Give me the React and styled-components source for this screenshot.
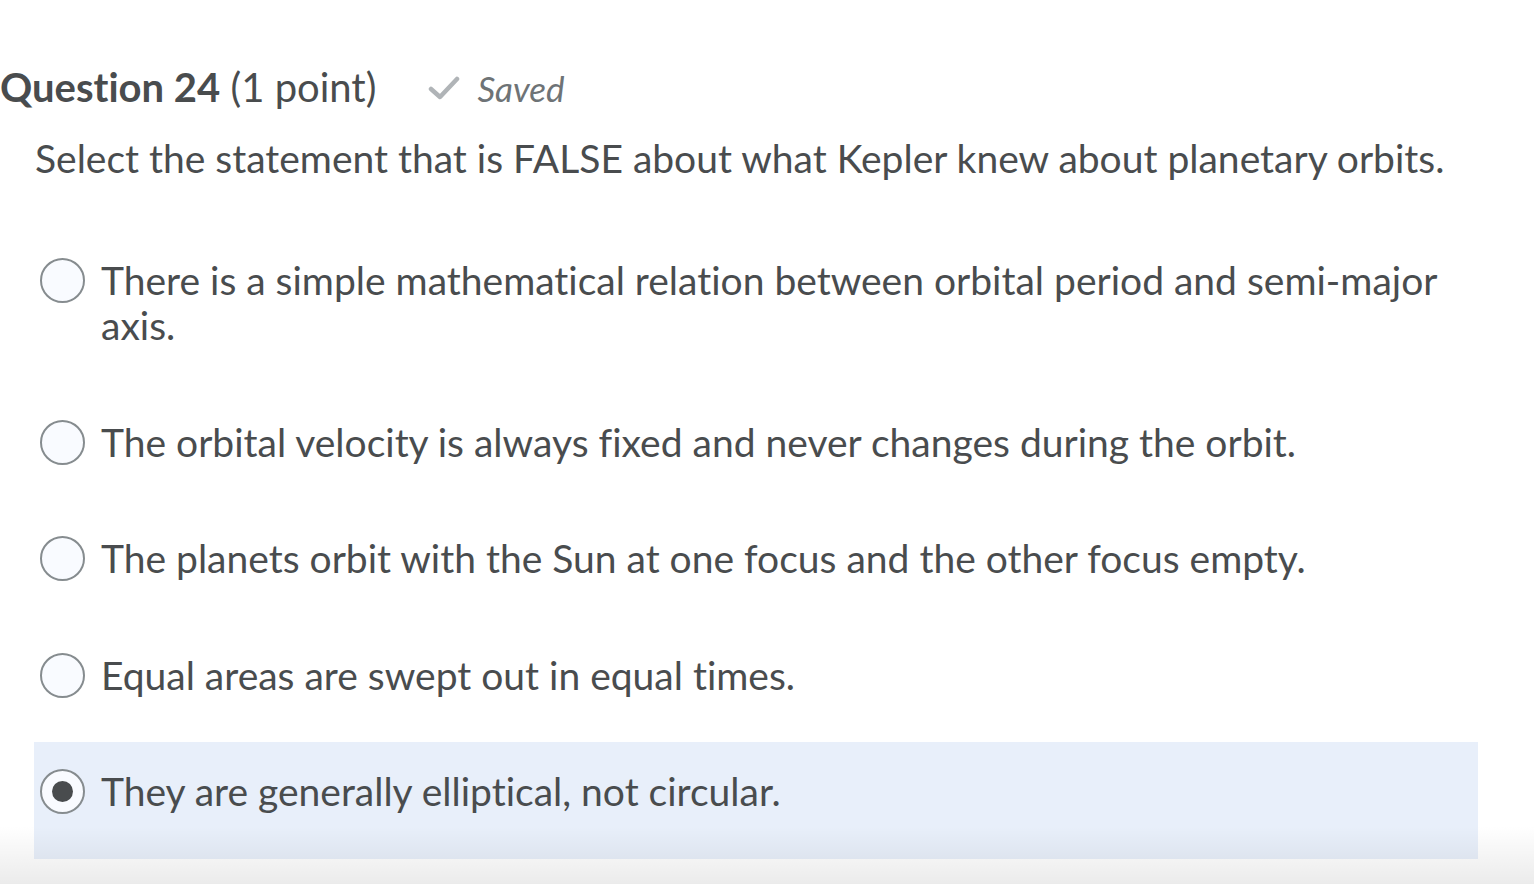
import React, { useState } from "react";
import styled, { createGlobalStyle } from "styled-components";

const GlobalStyle = createGlobalStyle`
  html, body {
    margin: 0;
    padding: 0;
    background: #fff;
  }
  body {
    font-family: Lato, "Open Sans", "Liberation Sans", sans-serif;
    font-variant-ligatures: none;
    color: #494c4e;
  }
`;

const Page = styled.div`
  width: 1534px;
  height: 884px;
  overflow: hidden;
  position: relative;
  padding-top: 65px;
  box-sizing: border-box;
`;

const Header = styled.div`
  display: flex;
  align-items: center;
  height: 45px;
`;

const Title = styled.h2`
  margin: 0;
  font-size: 40px;
  font-weight: 400;
  line-height: 45px;
  strong {
    font-weight: 700;
  }
`;

const Saved = styled.span`
  display: flex;
  align-items: center;
  gap: 17px;
  margin-left: 52px;
  font-size: 35px;
  font-style: italic;
  color: #6e7376;
`;

const Prompt = styled.p`
  margin: 26px 0 0 35px;
  font-size: 39px;
  line-height: 45px;
`;

const Options = styled.div`
  margin-top: 50px;
  display: flex;
  flex-direction: column;
`;

const Option = styled.label`
  display: flex;
  align-items: flex-start;
  margin-left: 34px;
  width: 1444px;
  box-sizing: border-box;
  padding: 27px 30px 44.5px 6px;
  background: ${({ selected }) => (selected ? "#e8effa" : "transparent")};
  cursor: pointer;
`;

const Radio = styled.span`
  flex: none;
  width: 45px;
  height: 45px;
  box-sizing: border-box;
  border-radius: 50%;
  border: 2px solid #868c8f;
  background: #f9fbff;
  display: flex;
  align-items: center;
  justify-content: center;
  margin-right: 16px;
  &::after {
    content: "";
    display: ${({ checked }) => (checked ? "block" : "none")};
    width: 21px;
    height: 21px;
    border-radius: 50%;
    background: #494c4e;
  }
`;

const OptionText = styled.span`
  font-size: 39px;
  line-height: 45px;
`;

const BottomFade = styled.div`
  position: absolute;
  left: 0;
  right: 0;
  bottom: 0;
  height: 58px;
  pointer-events: none;
  background: linear-gradient(to bottom, rgba(0, 0, 0, 0), rgba(0, 0, 0, 0.08));
`;

const answers = [
  "There is a simple mathematical relation between orbital period and semi-major axis.",
  "The orbital velocity is always fixed and never changes during the orbit.",
  "The planets orbit with the Sun at one focus and the other focus empty.",
  "Equal areas are swept out in equal times.",
  "They are generally elliptical, not circular.",
];

export default function App() {
  const [picked, setPicked] = useState(4);
  return (
    <Page>
      <GlobalStyle />
      <Header>
        <Title>
          <strong>Question 24</strong> (1 point)
        </Title>
        <Saved>
          <svg width="32" height="26" viewBox="0 0 32 26">
            <path
              d="M3 14 L12 22 L29 4"
              fill="none"
              stroke="#b0b4b7"
              strokeWidth="4.5"
              strokeLinecap="round"
              strokeLinejoin="round"
            />
          </svg>
          Saved
        </Saved>
      </Header>
      <Prompt>Select the statement that is FALSE about what Kepler knew about planetary orbits.</Prompt>
      <Options>
        {answers.map((a, i) => (
          <Option key={i} selected={picked === i} onClick={() => setPicked(i)}>
            <Radio checked={picked === i} />
            <OptionText>{a}</OptionText>
          </Option>
        ))}
      </Options>
      <BottomFade />
    </Page>
  );
}
